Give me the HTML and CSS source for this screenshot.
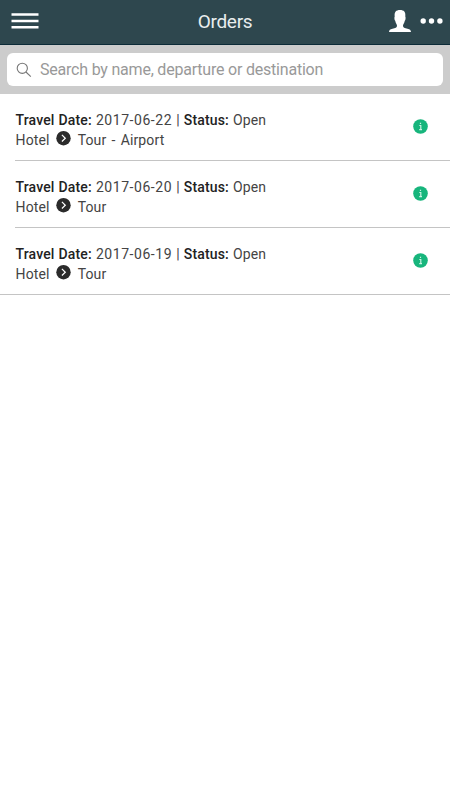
FILE: index.html
```html
<!DOCTYPE html>
<html lang="en">
<head>
<meta charset="utf-8">
<title>Orders</title>
<link rel="stylesheet" href="styles.css">
</head>
<body>
<header class="bar">
  <svg class="menu" width="28" height="18" viewBox="0 0 28 18"><path d="M.5 2.500h27M.5 9h27M.5 15.300h27" stroke="#fff" stroke-width="2.600"/></svg>
  <h1 class="title">Orders</h1>
  <div class="actions">
    <svg width="24" height="24" viewBox="0 0 24 24" fill="#fff"><path d="M1 23c.2-2 1.100-2.500 3.500-3.200 2.800-.8 4.500-1.200 4.500-3.100 0-1.300-1.300-2.100-1.800-5C6.300 11.200 6.200 8 6.700 7.500 6.200 3 8 1 12 1s5.800 2 5.300 6.500c.5.500.4 3.700-.5 4.200-.5 2.900-1.800 3.700-1.800 5 0 1.900 1.700 2.300 4.500 3.100 2.400.7 3.300 1.200 3.500 3.200z"/></svg>
    <svg width="24" height="8" viewBox="0 0 24 8" fill="#fff"><circle cx="3.200" cy="4" r="2.700"/><circle cx="11.500" cy="4" r="2.700"/><circle cx="19.900" cy="4" r="2.700"/></svg>
  </div>
</header>
<div class="search">
  <label class="field">
    <svg width="16" height="16" viewBox="0 0 16 16" fill="none" stroke="#777" stroke-width="1.100"><circle cx="6.300" cy="6.300" r="5.100"/><path d="M10 10l4.800 4.600"/></svg>
    <input type="text" placeholder="Search by name, departure or destination">
  </label>
</div>
<main class="list">
  <article class="order">
    <div class="details">
      <p><b>Travel Date:</b> <span class="date">2017-06-22</span> | <b>Status:</b> Open</p>
      <p class="route"><span>Hotel</span><svg class="arrow" width="15" height="15" viewBox="0 0 15 15"><circle cx="7.500" cy="7.200" r="7.200" fill="#2b2b2b"/><path d="M5.900 3.900l3.400 3.300-3.400 3.300" fill="none" stroke="#fff" stroke-width="1.200"/></svg><span>Tour - Airport</span></p>
    </div>
    <svg class="info" width="15" height="15" viewBox="0 0 15 15"><circle cx="7.500" cy="7.500" r="7.300" fill="#17b57c"/><path d="M6.300 6.500h1.500v4M6.200 10.600h2.800M7.500 3.700v1.400" fill="none" stroke="#c9f3e2" stroke-width="1.200"/></svg>
  </article>
  <article class="order">
    <div class="details">
      <p><b>Travel Date:</b> <span class="date">2017-06-20</span> | <b>Status:</b> Open</p>
      <p class="route"><span>Hotel</span><svg class="arrow" width="15" height="15" viewBox="0 0 15 15"><circle cx="7.500" cy="7.200" r="7.200" fill="#2b2b2b"/><path d="M5.900 3.900l3.400 3.300-3.400 3.300" fill="none" stroke="#fff" stroke-width="1.200"/></svg><span>Tour</span></p>
    </div>
    <svg class="info" width="15" height="15" viewBox="0 0 15 15"><circle cx="7.500" cy="7.500" r="7.300" fill="#17b57c"/><path d="M6.300 6.500h1.500v4M6.200 10.600h2.800M7.500 3.700v1.400" fill="none" stroke="#c9f3e2" stroke-width="1.200"/></svg>
  </article>
  <article class="order">
    <div class="details">
      <p><b>Travel Date:</b> <span class="date">2017-06-19</span> | <b>Status:</b> Open</p>
      <p class="route"><span>Hotel</span><svg class="arrow" width="15" height="15" viewBox="0 0 15 15"><circle cx="7.500" cy="7.200" r="7.200" fill="#2b2b2b"/><path d="M5.900 3.900l3.400 3.300-3.400 3.300" fill="none" stroke="#fff" stroke-width="1.200"/></svg><span>Tour</span></p>
    </div>
    <svg class="info" width="15" height="15" viewBox="0 0 15 15"><circle cx="7.500" cy="7.500" r="7.300" fill="#17b57c"/><path d="M6.300 6.500h1.500v4M6.200 10.600h2.800M7.500 3.700v1.400" fill="none" stroke="#c9f3e2" stroke-width="1.200"/></svg>
  </article>
</main>
</body>
</html>
```
FILE: styles.css
```css
* { box-sizing: border-box; }
body { margin: 0; min-height: 100vh; background: #fff; color: #444; font-family: Roboto, sans-serif; }
svg { display: block; flex: none; }
.bar { height: 45px; display: grid; grid-template-columns: 1fr auto 1fr; align-items: center; padding: 0 6px 3px 11px; background: #2e474e; border-bottom: 1px solid #0c2b38; }
.title { margin: 2px 0 0 -5px; font-size: 19px; line-height: 24px; letter-spacing: -.3px; font-weight: 400; color: #e9eeee; }
.actions { display: flex; align-items: center; justify-content: flex-end; gap: 8px; }
.search { height: 49px; padding: 8px 7px; background: #ccc; }
.field { display: flex; align-items: center; gap: 8px; height: 33px; padding: 0 9px; background: #fff; border-radius: 6px; }
.field input { flex: 1; min-width: 0; padding: 0; border: 0; outline: 0; background: none; font: 16px/20px Roboto, sans-serif; letter-spacing: -.21px; }
.field input::placeholder { color: #999; opacity: 1; }
.order { position: relative; display: flex; justify-content: space-between; height: 67px; padding: 16px 22px 0 15.5px; }
.order::after { content: ""; position: absolute; left: 15px; right: 0; bottom: 0; height: 1px; background: #c4c4c4; }
.order:last-child::after { left: 0; }
.details { font-size: 14px; line-height: 20px; letter-spacing: .15px; }
.details p { margin: 0; word-spacing: .4px; }
.details b { font-weight: 500; color: #222; }
.details .date { letter-spacing: .56px; }
.route { display: flex; }
.details .route { word-spacing: 1.500px; }
.arrow { margin: 1px 6.500px 0; }
.info { margin-top: 9px; }
```
